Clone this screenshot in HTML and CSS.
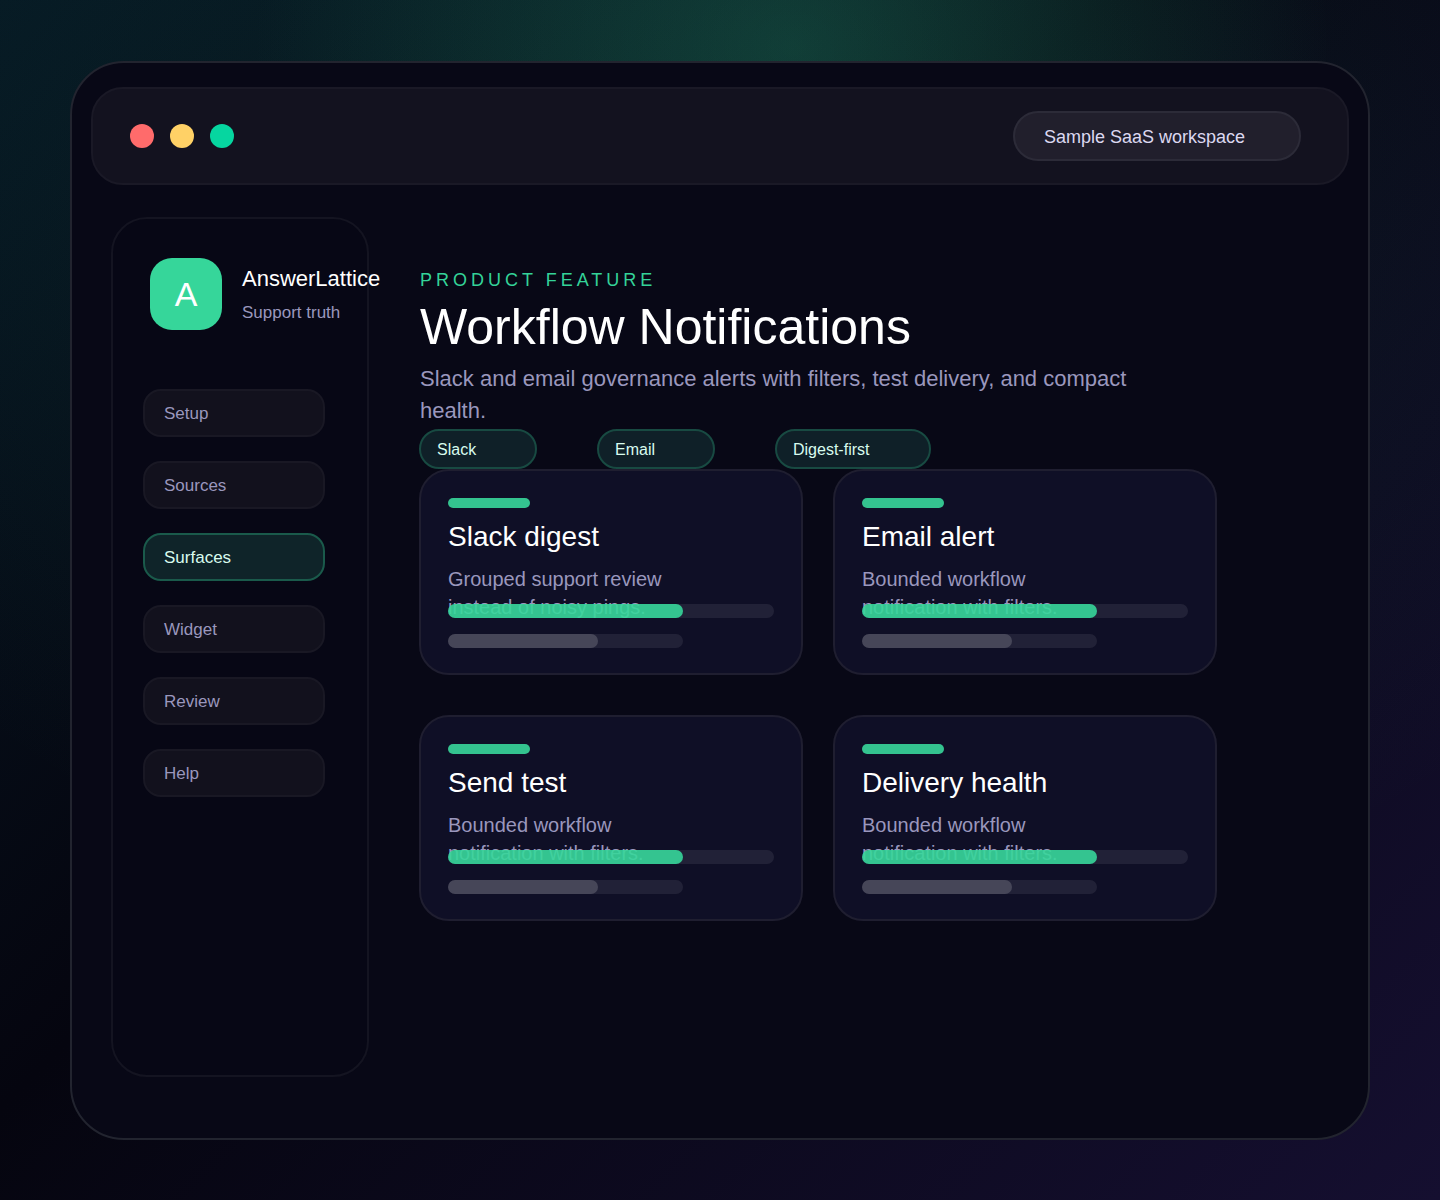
FILE: index.html
```html
<!DOCTYPE html>
<html lang="en">
<head>
    <meta charset="UTF-8">
    <meta name="viewport" content="width=device-width, initial-scale=1.0">
    <title>AnswerLattice - Workflow Notifications</title>
    <link rel="stylesheet" href="styles.css">
</head>
<body>
    <div class="window">
        <header class="titlebar">
            <div class="dots">
                <span class="dot red"></span>
                <span class="dot yellow"></span>
                <span class="dot green"></span>
            </div>
            <div class="workspace">Sample SaaS workspace</div>
        </header>

        <div class="content">
            <aside class="sidebar">
                <div class="brand">
                    <div class="logo">A</div>
                    <div class="brand-text">
                        <div class="brand-name">AnswerLattice</div>
                        <div class="brand-tag">Support truth</div>
                    </div>
                </div>
                <nav class="menu">
                    <a href="#">Setup</a>
                    <a href="#">Sources</a>
                    <a href="#" class="active">Surfaces</a>
                    <a href="#">Widget</a>
                    <a href="#">Review</a>
                    <a href="#">Help</a>
                </nav>
            </aside>

            <main class="main">
                <p class="eyebrow">PRODUCT FEATURE</p>
                <h1>Workflow Notifications</h1>
                <p class="intro">Slack and email governance alerts with filters, test delivery, and compact health.</p>

                <div class="chips">
                    <span class="chip">Slack</span>
                    <span class="chip">Email</span>
                    <span class="chip wide">Digest-first</span>
                </div>

                <div class="cards">
                    <section class="card">
                        <div class="accent"></div>
                        <h2>Slack digest</h2>
                        <p>Grouped support review instead of noisy pings.</p>
                        <div class="bars">
                            <div class="track"><div class="fill" style="width: 72%"></div></div>
                            <div class="track short"><div class="fill muted" style="width: 64%"></div></div>
                        </div>
                    </section>
                    <section class="card">
                        <div class="accent"></div>
                        <h2>Email alert</h2>
                        <p>Bounded workflow notification with filters.</p>
                        <div class="bars">
                            <div class="track"><div class="fill" style="width: 72%"></div></div>
                            <div class="track short"><div class="fill muted" style="width: 64%"></div></div>
                        </div>
                    </section>
                    <section class="card">
                        <div class="accent"></div>
                        <h2>Send test</h2>
                        <p>Bounded workflow notification with filters.</p>
                        <div class="bars">
                            <div class="track"><div class="fill" style="width: 72%"></div></div>
                            <div class="track short"><div class="fill muted" style="width: 64%"></div></div>
                        </div>
                    </section>
                    <section class="card">
                        <div class="accent"></div>
                        <h2>Delivery health</h2>
                        <p>Bounded workflow notification with filters.</p>
                        <div class="bars">
                            <div class="track"><div class="fill" style="width: 72%"></div></div>
                            <div class="track short"><div class="fill muted" style="width: 64%"></div></div>
                        </div>
                    </section>
                </div>
            </main>
        </div>
    </div>
</body>
</html>
```
FILE: styles.css
```css
* {
    box-sizing: border-box;
}

body {
    margin: 0;
    min-height: 100vh;
    padding: 61px 70px 60px;
    display: flex;
    font-family: "Liberation Sans", Helvetica, Arial, sans-serif;
    color: #fff;
    background:
        radial-gradient(540px 460px at 55% 4%, rgba(52, 211, 153, 0.2), rgba(52, 211, 153, 0)),
        radial-gradient(1050px 760px at 52% 18%, rgba(40, 190, 150, 0.11), rgba(40, 190, 150, 0)),
        linear-gradient(135deg, #061722 0%, #05050f 42%, #150f30 100%);
}

h1, h2, p {
    margin: 0;
    font-weight: normal;
}

.window {
    flex: 1;
    display: flex;
    flex-direction: column;
    padding: 24px 19px 61px;
    background-color: #080816;
    border: 2px solid #22242f;
    border-radius: 54px;
}

/* Title bar */
.titlebar {
    display: flex;
    justify-content: space-between;
    align-items: center;
    height: 98px;
    padding: 0 46px 0 37px;
    background-color: #13121f;
    border: 2px solid #1a1926;
    border-radius: 32px;
}

.dots {
    display: flex;
    gap: 16px;
}

.dot {
    width: 24px;
    height: 24px;
    border-radius: 50%;
}

.red {
    background-color: #ff6b6b;
}

.yellow {
    background-color: #ffd166;
}

.green {
    background-color: #06d6a0;
}

.workspace {
    width: 288px;
    padding: 2px 29px 0;
    line-height: 44px;
    font-size: 18px;
    color: #dcd8f0;
    background-color: #211f2c;
    border: 2px solid #2c2b38;
    border-radius: 25px;
}

.content {
    flex: 1;
    display: flex;
    gap: 50px;
    margin: 32px 132px 0 20px;
}

/* Sidebar */
.sidebar {
    flex: none;
    width: 258px;
    padding: 39px 42px 39px 30px;
    background-color: #070715;
    border: 2px solid #141421;
    border-radius: 36px;
}

.brand {
    display: flex;
    align-items: flex-start;
    gap: 20px;
    margin: 0 0 58px 7px;
    white-space: nowrap;
}

.logo {
    flex: none;
    width: 72px;
    line-height: 72px;
    font-size: 34px;
    text-align: center;
    background-color: #36d69a;
    border-radius: 22px;
}

.brand-name {
    margin-top: 5px;
    font-size: 22px;
    line-height: 32px;
}

.brand-tag {
    font-size: 17px;
    line-height: 36px;
    color: #9a97bd;
}

.menu {
    display: flex;
    flex-direction: column;
    gap: 24px;
}

.menu a {
    padding: 2px 19px 0;
    font-size: 17px;
    line-height: 42px;
    color: #9a97bd;
    text-decoration: none;
    background-color: #12111d;
    border: 2px solid #191824;
    border-radius: 18px;
}

.menu .active {
    color: #d8fbee;
    background-color: #0f2429;
    border-color: #1a5a4b;
}

/* Main panel */
.main {
    flex: 1;
    padding-top: 50px;
}

.eyebrow {
    margin-left: 1px;
    font-size: 18px;
    line-height: 26px;
    letter-spacing: 4px;
    color: #34d399;
}

h1 {
    margin: 0 0 2px 1px;
    font-size: 50px;
    line-height: 68px;
}

.intro {
    max-width: 760px;
    margin-left: 1px;
    font-size: 22px;
    line-height: 32px;
    color: #9a97bd;
}

.chips {
    display: flex;
    gap: 60px;
    margin-top: 2px;
}

.chip {
    width: 118px;
    padding: 2px 16px 0;
    font-size: 16px;
    line-height: 34px;
    color: #d8fbee;
    background-color: #0f2028;
    border: 2px solid #184a42;
    border-radius: 20px;
}

.chip.wide {
    width: 156px;
}

.cards {
    display: grid;
    grid-template-columns: 1fr 1fr;
    gap: 40px 30px;
}

.card {
    padding: 27px 27px 25px;
    background-color: #0f0f26;
    border: 2px solid #1f1e30;
    border-radius: 30px;
}

.accent {
    width: 82px;
    height: 10px;
    background-color: #34c38f;
    border-radius: 5px;
}

.card h2 {
    margin: 9px 0 8px;
    font-size: 28px;
    line-height: 40px;
}

.card p {
    max-width: 240px;
    font-size: 20px;
    line-height: 28px;
    color: #9a97bd;
}

/* The bars sit over the second line of the card text */
.bars {
    display: grid;
    gap: 16px;
    margin-top: -17px;
    isolation: isolate;
}

.track {
    height: 14px;
    background-color: rgba(255, 255, 255, 0.08);
    border-radius: 7px;
}

.track.short {
    width: 72%;
}

.fill {
    height: 14px;
    background-color: #36d69a;
    border-radius: 7px;
    opacity: 0.9;
}

.fill.muted {
    background-color: rgba(255, 255, 255, 0.19);
}
```
